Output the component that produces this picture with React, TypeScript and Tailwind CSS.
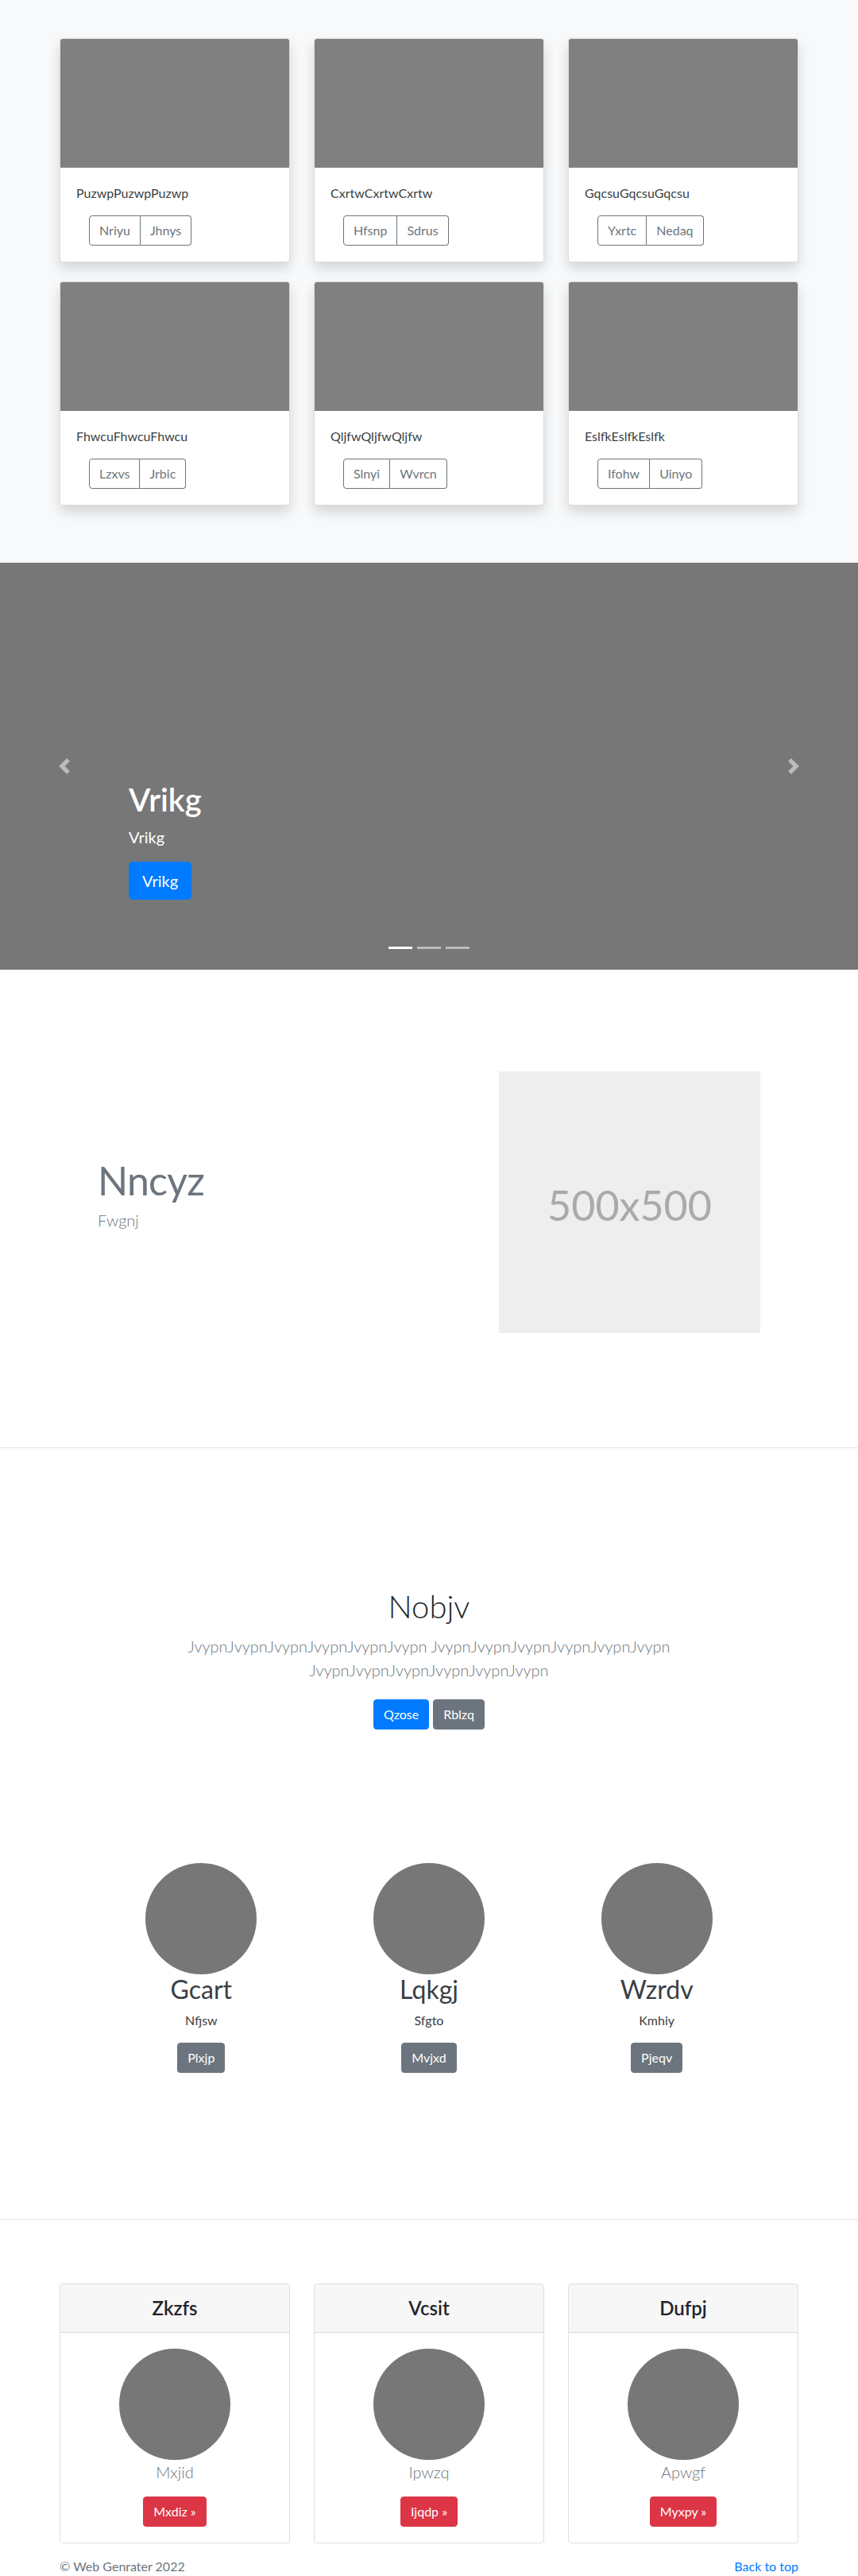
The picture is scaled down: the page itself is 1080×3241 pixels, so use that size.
const albumCards = [
  { title: "PuzwpPuzwpPuzwp", a: "Nriyu", b: "Jhnys" },
  { title: "CxrtwCxrtwCxrtw", a: "Hfsnp", b: "Sdrus" },
  { title: "GqcsuGqcsuGqcsu", a: "Yxrtc", b: "Nedaq" },
  { title: "FhwcuFhwcuFhwcu", a: "Lzxvs", b: "Jrbic" },
  { title: "QljfwQljfwQljfw", a: "Slnyi", b: "Wvrcn" },
  { title: "EslfkEslfkEslfk", a: "Ifohw", b: "Uinyo" },
];

const team = [
  { name: "Gcart", text: "Nfjsw", btn: "Plxjp" },
  { name: "Lqkgj", text: "Sfgto", btn: "Mvjxd" },
  { name: "Wzrdv", text: "Kmhiy", btn: "Pjeqv" },
];

const pricing = [
  { title: "Zkzfs", text: "Mxjid", btn: "Mxdiz »" },
  { title: "Vcsit", text: "Ipwzq", btn: "Ijqdp »" },
  { title: "Dufpj", text: "Apwgf", btn: "Myxpy »" },
];

const AlbumCard = ({ title, a, b }: { title: string; a: string; b: string }) => (
  <div className="bg-white border border-black/[0.125] rounded overflow-hidden shadow-[0_8px_16px_rgba(0,0,0,0.15)]">
    <div className="h-[162px] bg-[#808080]" />
    <div className="p-5">
      <p className="text-[16px] leading-6 mb-4 text-[#3a3f44]">{title}</p>
      <div className="ml-4 inline-flex text-[16px] leading-6 text-[#6c757d]">
        <button className="px-3 py-[6px] border border-[#6c757d] rounded-l">{a}</button>
        <button className="px-3 py-[6px] border border-l-0 border-[#6c757d] rounded-r">{b}</button>
      </div>
    </div>
  </div>
);

const Chevron = ({ dir }: { dir: "prev" | "next" }) => (
  <svg width="20" height="20" viewBox="0 0 8 8" className="opacity-50">
    <path
      fill="#fff"
      d={
        dir === "prev"
          ? "M5.25 0l-4 4 4 4 1.5-1.5L4.25 4l2.5-2.5L5.25 0z"
          : "M2.75 0l-1.5 1.5L3.75 4l-2.5 2.5L2.75 8l4-4-4-4z"
      }
    />
  </svg>
);

export default function App() {
  return (
    <div className="font-['Lato',sans-serif] text-[#212529] bg-white">
      {/* album */}
      <section className="bg-[#f8f9fa] pt-12 pb-[72px]">
        <div className="w-[960px] mx-auto px-[15px] grid grid-cols-3 gap-x-[30px] gap-y-6">
          {albumCards.map((c) => (
            <AlbumCard key={c.title} {...c} />
          ))}
        </div>
      </section>

      {/* carousel */}
      <section className="relative h-[512px] bg-[#777]">
        <div className="absolute left-0 top-0 bottom-0 w-[15%] flex items-center justify-center">
          <Chevron dir="prev" />
        </div>
        <div className="absolute right-0 top-0 bottom-0 w-[15%] flex items-center justify-center">
          <Chevron dir="next" />
        </div>
        <div className="absolute left-[15%] right-[15%] bottom-[88px] text-white">
          <h1 className="text-[40px] leading-[1.2] font-semibold mb-2">Vrikg</h1>
          <p className="text-[20px] leading-[30px] mb-4">Vrikg</p>
          <button className="bg-[#007bff] border border-[#007bff] text-white text-[20px] leading-[30px] px-4 py-2 rounded-[5px]">
            Vrikg
          </button>
        </div>
        <div className="absolute bottom-[26px] left-0 right-0 flex justify-center gap-[6px]">
          <span className="w-[30px] h-[3px] bg-white" />
          <span className="w-[30px] h-[3px] bg-white/50" />
          <span className="w-[30px] h-[3px] bg-white/50" />
        </div>
      </section>

      {/* featurette */}
      <section className="pt-[128px] pb-[144px]">
        <div className="w-[960px] mx-auto flex items-center">
          <div className="w-[568px] pl-[63px]">
            <h2 className="text-[50px] leading-none font-normal tracking-[-0.8px] text-[#6c757d] mb-[10px]">
              Nncyz
            </h2>
            <p className="text-[20px] leading-[30px] font-light text-[#6c757d] mb-4">Fwgnj</p>
          </div>
          <div className="w-[329px] h-[329px] bg-[#eee] flex items-center justify-center text-[52px] text-[#aaa] pt-[6px]">
            500x500
          </div>
        </div>
      </section>
      <hr className="border-0 border-t border-black/10" />

      {/* jumbotron */}
      <section className="pt-[175px] text-center">
        <h1 className="text-[40px] leading-[1.2] font-light mb-[11px]">Nobjv</h1>
        <p className="max-w-[640px] mx-auto px-[15px] text-[20px] leading-[30px] font-light text-[#6c757d]">
          JvypnJvypnJvypnJvypnJvypnJvypn JvypnJvypnJvypnJvypnJvypnJvypn JvypnJvypnJvypnJvypnJvypnJvypn
        </p>
        <div className="mt-[22px] flex justify-center gap-[5px] text-[16px] leading-6 text-white">
          <button className="bg-[#007bff] border border-[#007bff] px-3 py-[6px] rounded">Qzose</button>
          <button className="bg-[#6c757d] border border-[#6c757d] px-3 py-[6px] rounded">Rblzq</button>
        </div>
      </section>

      {/* team */}
      <section className="pt-[168px] pb-[184px]">
        <div className="w-[860px] mx-auto grid grid-cols-3">
          {team.map((t) => (
            <div key={t.name} className="flex flex-col items-center text-center">
              <div className="w-[140px] h-[140px] rounded-full bg-[#777]" />
              <h2 className="text-[32px] leading-[1.2] mb-2 text-[#3a3f44]">{t.name}</h2>
              <p className="text-[16px] leading-6 mb-4 text-[#3a3f44]">{t.text}</p>
              <button className="bg-[#6c757d] border border-[#6c757d] text-white text-[16px] leading-6 px-3 py-[6px] rounded">
                {t.btn}
              </button>
            </div>
          ))}
        </div>
      </section>
      <hr className="border-0 border-t border-black/10" />

      {/* pricing */}
      <section className="pt-[80px]">
        <div className="w-[960px] mx-auto px-[15px] grid grid-cols-3 gap-x-[30px]">
          {pricing.map((p) => (
            <div key={p.title} className="border border-black/[0.125] rounded text-center overflow-hidden">
              <div className="bg-black/[0.03] border-b border-black/[0.125] py-4">
                <h4 className="text-[24px] leading-[28px] font-semibold">{p.title}</h4>
              </div>
              <div className="p-5 flex flex-col items-center">
                <div className="w-[140px] h-[140px] rounded-full bg-[#777]" />
                <p className="text-[20px] leading-[30px] font-light text-[#6c757d] mb-4">{p.text}</p>
                <button className="bg-[#dc3545] border border-[#dc3545] text-white text-[16px] leading-6 px-3 py-[6px] rounded">
                  {p.btn}
                </button>
              </div>
            </div>
          ))}
        </div>
      </section>

      {/* footer */}
      <footer className="w-[960px] mx-auto px-[15px] pt-[17px] flex justify-between text-[16px] leading-6">
        <p className="text-[#6c757d]">© Web Genrater 2022</p>
        <a href="#" className="text-[#007bff]">
          Back to top
        </a>
      </footer>
    </div>
  );
}
